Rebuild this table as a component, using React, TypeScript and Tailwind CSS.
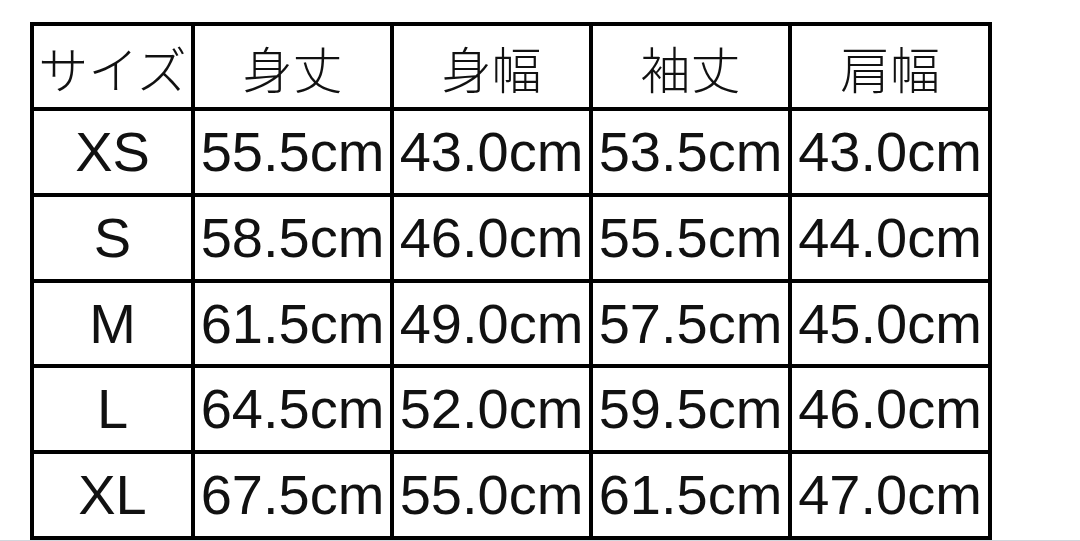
import React from "react";

const headers = ["サイズ", "身丈", "身幅", "袖丈", "肩幅"];
const rows: string[][] = [
  ["XS", "55.5cm", "43.0cm", "53.5cm", "43.0cm"],
  ["S", "58.5cm", "46.0cm", "55.5cm", "44.0cm"],
  ["M", "61.5cm", "49.0cm", "57.5cm", "45.0cm"],
  ["L", "64.5cm", "52.0cm", "59.5cm", "46.0cm"],
  ["XL", "67.5cm", "55.0cm", "61.5cm", "47.0cm"],
];

export default function App() {
  return (
    <div className="w-[1080px] h-[541px] bg-white overflow-hidden relative">
      <div className="pt-[22px] pl-[30px]">
        <div className="grid w-[962px] bg-black gap-[4px] p-[4px] grid-cols-[157px_195px_195px_195px_196px] grid-rows-[81px_82px_82px_81px_82px_82px]">
          {headers.map((h) => (
            <div
              key={h}
              className="bg-white flex items-center justify-center whitespace-nowrap text-[50px] leading-none font-light text-[#111]"
              style={{ fontFamily: '"Noto Sans CJK JP", "Noto Sans", sans-serif' }}
            >
              {h}
            </div>
          ))}
          {rows.map((r) =>
            r.map((c, i) => (
              <div
                key={r[0] + i}
                className="bg-white flex items-center justify-center whitespace-nowrap overflow-visible text-[56px] leading-none text-[#111] font-['Liberation_Sans',Arial,sans-serif]"
              >
                {c}
              </div>
            ))
          )}
        </div>
      </div>
      <div className="absolute left-0 right-0 bottom-0 h-px bg-gray-300" />
    </div>
  );
}
